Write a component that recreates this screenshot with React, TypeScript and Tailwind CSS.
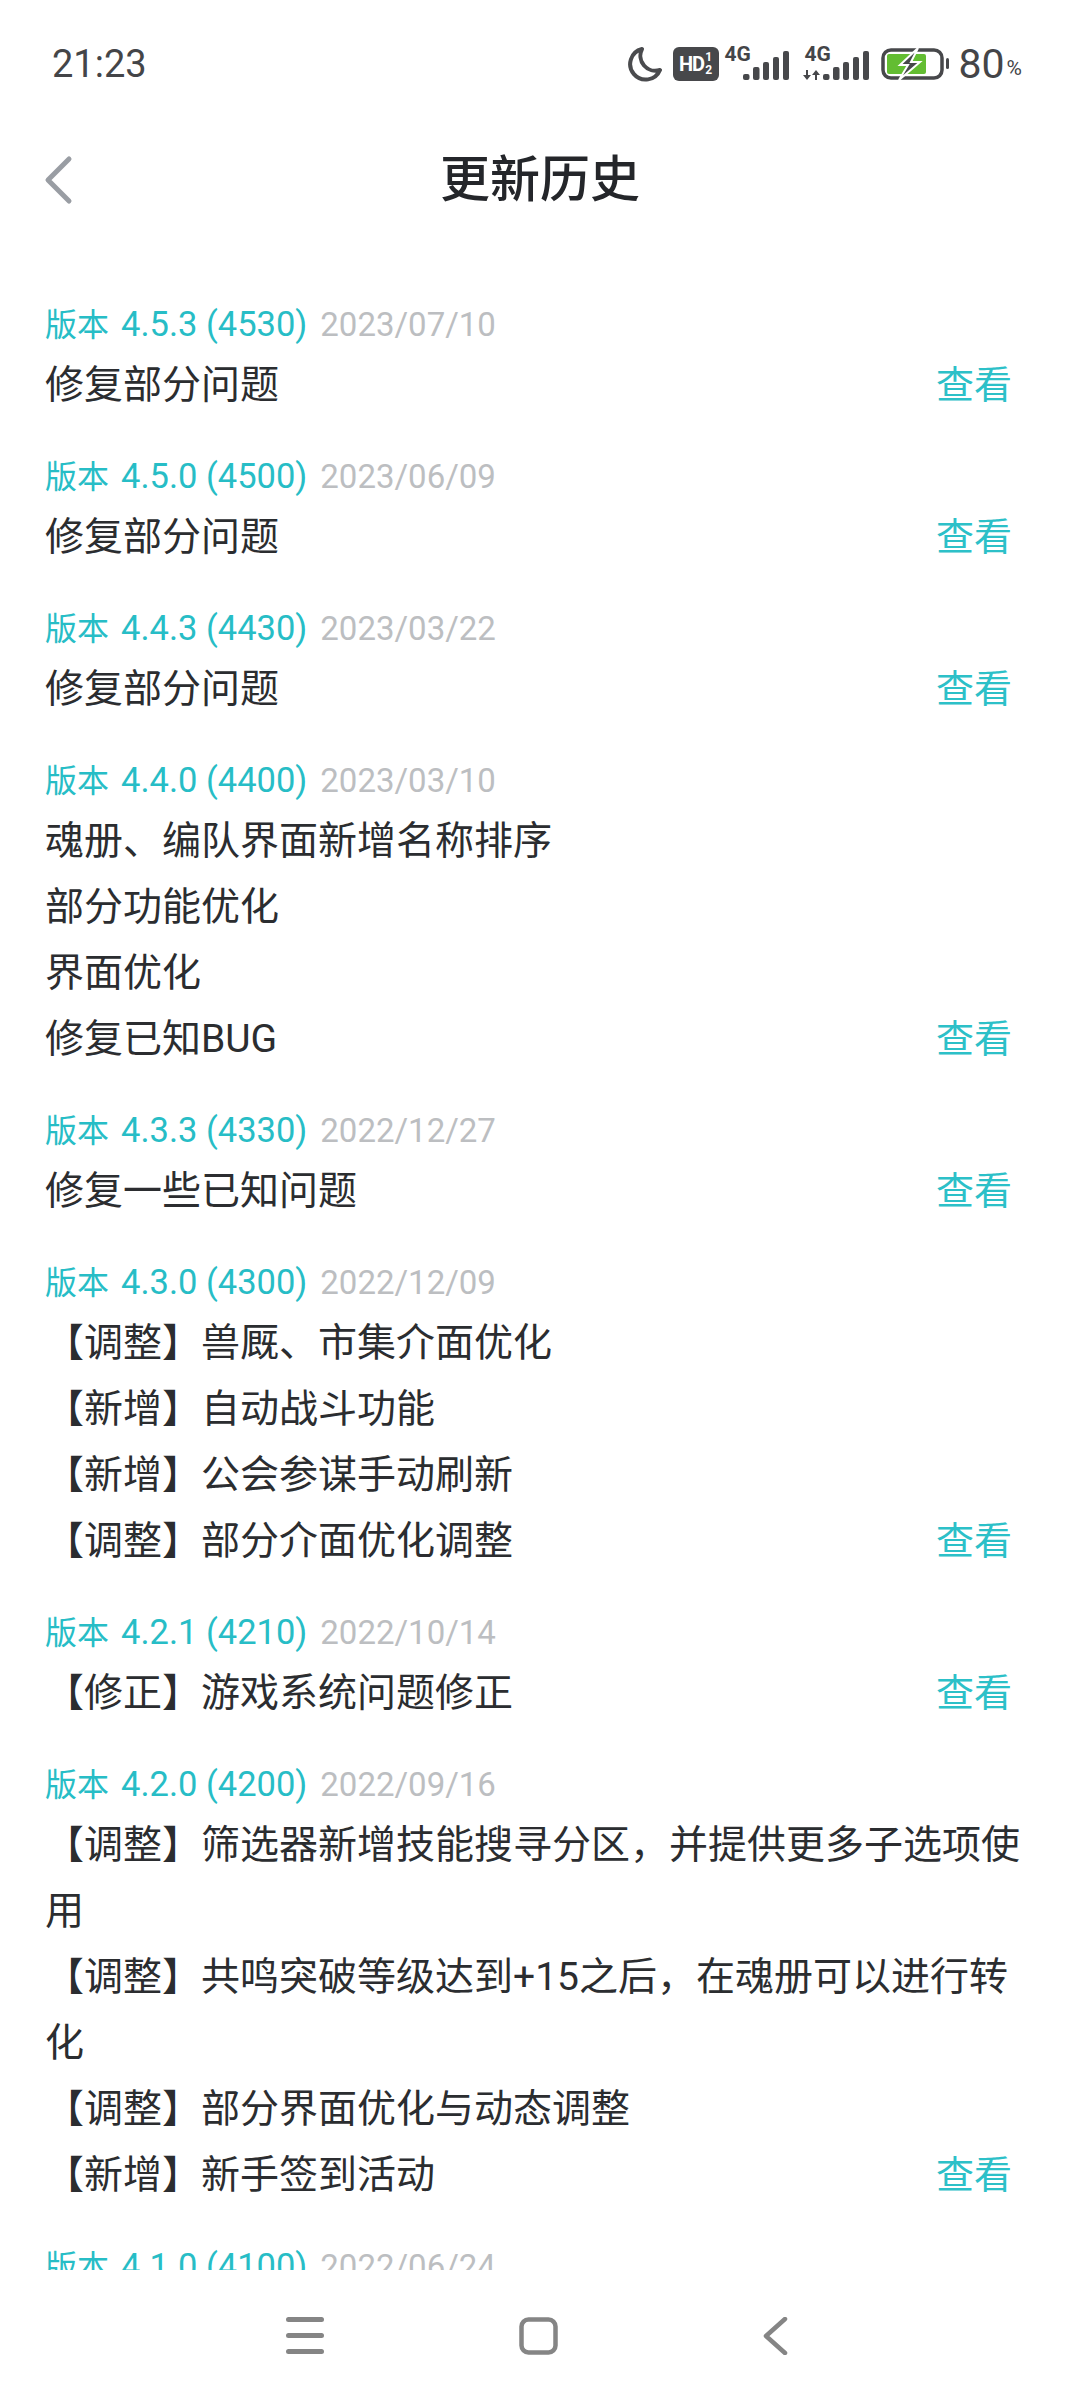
const FONT = "font-['Roboto','Noto_Sans_CJK_SC',sans-serif]";

interface Release {
    version: string;
    date: string;
    lines: string[];
}

const releases: Release[] = [
    { version: "4.5.3 (4530)", date: "2023/07/10", lines: ["修复部分问题"] },
    { version: "4.5.0 (4500)", date: "2023/06/09", lines: ["修复部分问题"] },
    { version: "4.4.3 (4430)", date: "2023/03/22", lines: ["修复部分问题"] },
    {
        version: "4.4.0 (4400)",
        date: "2023/03/10",
        lines: ["魂册、编队界面新增名称排序", "部分功能优化", "界面优化", "修复已知BUG"],
    },
    { version: "4.3.3 (4330)", date: "2022/12/27", lines: ["修复一些已知问题"] },
    {
        version: "4.3.0 (4300)",
        date: "2022/12/09",
        lines: ["【调整】兽厩、市集介面优化", "【新增】自动战斗功能", "【新增】公会参谋手动刷新", "【调整】部分介面优化调整"],
    },
    { version: "4.2.1 (4210)", date: "2022/10/14", lines: ["【修正】游戏系统问题修正"] },
    {
        version: "4.2.0 (4200)",
        date: "2022/09/16",
        lines: [
            "【调整】筛选器新增技能搜寻分区，并提供更多子选项使用",
            "【调整】共鸣突破等级达到+15之后，在魂册可以进行转化",
            "【调整】部分界面优化与动态调整",
            "【新增】新手签到活动",
        ],
    },
    { version: "4.1.0 (4100)", date: "2022/06/24", lines: ["修复部分问题"] },
];

function Bars({ x = 0 }: { x?: number }) {
    return (
        <>
            <rect x={x} y="24" width="6.500" height="6" rx="2" />
            <rect x={x + 10} y="17" width="6.500" height="13" rx="2" />
            <rect x={x + 20} y="12" width="6" height="18" rx="2" />
            <rect x={x + 30} y="7" width="6" height="23" rx="2" />
            <rect x={x + 40} y="1" width="6" height="29" rx="2" />
        </>
    );
}

function StatusBar() {
    return (
        <div className="h-[124px] pl-[52px] pr-[58px] pt-[41px] flex items-start justify-between text-[#444548]">
            <span className="text-[38px] leading-[46px]">21:23</span>
            <div className="flex items-center h-[46px]">
                <svg width="36" height="36" viewBox="0 0 36 36" fill="none" stroke="#4a4b4e" strokeWidth="4" strokeLinejoin="round">
                    <path d="M15 3 A15.500 15.500 0 1 0 33 24 A15 15 0 0 1 15 3 Z" />
                </svg>
                <div className="ml-[10px] w-[46px] h-[34px] rounded-[6px] bg-[#47484b] text-white flex items-center justify-center">
                    <span className="text-[20px] font-bold leading-none tracking-[-1px]">HD</span>
                    <span className="flex flex-col text-[12px] font-bold leading-[13px] ml-[1px]">
                        <span>1</span>
                        <span>2</span>
                    </span>
                </div>
                <div className="relative w-[65px] h-[34px] ml-[6px]">
                    <span className="absolute left-0 -top-[3px] text-[21px] font-bold leading-[21px]">4G</span>
                    <svg className="absolute left-[18px] top-[3px]" width="47" height="31" fill="#47484b">
                        <Bars />
                    </svg>
                </div>
                <div className="relative w-[66px] h-[34px] ml-[13px]">
                    <span className="absolute left-[2px] -top-[3px] text-[21px] font-bold leading-[21px]">4G</span>
                    <svg className="absolute left-0 top-[3px]" width="66" height="31" fill="#47484b">
                        <path d="M3 20 H5 V25 H8 L4 30 L0 25 H3 Z M9 25 L13 20 L17 25 H14 V30 H12 V25 Z" />
                        <Bars x={20} />
                    </svg>
                </div>
                <svg className="ml-[12px]" width="68" height="32" viewBox="0 0 68 32">
                    <rect x="2" y="2" width="59" height="28" rx="8" fill="none" stroke="#47484b" strokeWidth="3.500" />
                    <rect x="6" y="6" width="39" height="20" rx="2" fill="#63bd32" />
                    <path d="M37 0 L19 17 H27 L18 32 L39 14 H30 L37 0 Z" fill="#47484b" stroke="#ffffff" strokeWidth="2" />
                    <rect x="65" y="10" width="3" height="11" rx="1.500" fill="#47484b" />
                </svg>
                <span className="ml-[10px] text-[41px] leading-[46px]">80</span>
                <span className="ml-[2px] mt-[8px] text-[21px] leading-[24px]">%</span>
            </div>
        </div>
    );
}

function ReleaseItem({ release }: { release: Release }) {
    const lastIndex = release.lines.length - 1;

    return (
        <div className="mb-[34px]">
            <div className="h-[48px] leading-[48px] whitespace-nowrap">
                <span className="text-[32px] text-[#27bdc6]">版本</span>
                <span className="ml-[12px] text-[34.500px] text-[#27bdc6]">{release.version}</span>
                <span className="ml-[13px] text-[33px] text-[#bcbec1]">{release.date}</span>
            </div>
            <div className="mt-[4px]">
                {release.lines.map((line, i) => (
                    <div key={i} className="flex justify-between text-[39px] leading-[66px] text-[#2b2d30]">
                        <span>{line}</span>
                        {i === lastIndex && <span className="mr-[8px] text-[38px] text-[#2cc0c8]">查看</span>}
                    </div>
                ))}
            </div>
        </div>
    );
}

export default function App() {
    return (
        <div className={`${FONT} w-[1080px] h-[2400px] bg-white flex flex-col overflow-hidden`}>
            <StatusBar />
            <div className="h-[112px] relative flex items-center justify-center">
                <svg className="absolute left-[42px] top-[31px]" width="32" height="50" viewBox="0 0 32 50" fill="none" stroke="#999da3" strokeWidth="5" strokeLinecap="round" strokeLinejoin="round">
                    <path d="M27 4 L6 25 L27 46" />
                </svg>
                <h1 className="text-[50px] font-medium text-[#24262a]">更新历史</h1>
            </div>
            <div className="flex-1 min-h-0 overflow-hidden pt-[64px] pl-[45px] pr-[60px]">
                {releases.map((release) => (
                    <ReleaseItem key={release.version} release={release} />
                ))}
            </div>
            <div className="h-[130px] bg-white flex items-start pl-[286px] pt-[47px]">
                <svg width="38" height="37" fill="#858585">
                    <rect y="0" width="38" height="5" rx="2.500" />
                    <rect y="16" width="38" height="5" rx="2.500" />
                    <rect y="32" width="38" height="5" rx="2.500" />
                </svg>
                <svg className="ml-[195px]" width="39" height="38" fill="none" stroke="#858585" strokeWidth="4.500">
                    <rect x="2.500" y="2.500" width="34" height="33" rx="7" />
                </svg>
                <svg className="ml-[204px]" width="26" height="38" fill="none" stroke="#858585" strokeWidth="4.500" strokeLinecap="round" strokeLinejoin="round">
                    <path d="M23 2 L4 19 L23 36" />
                </svg>
            </div>
        </div>
    );
}
